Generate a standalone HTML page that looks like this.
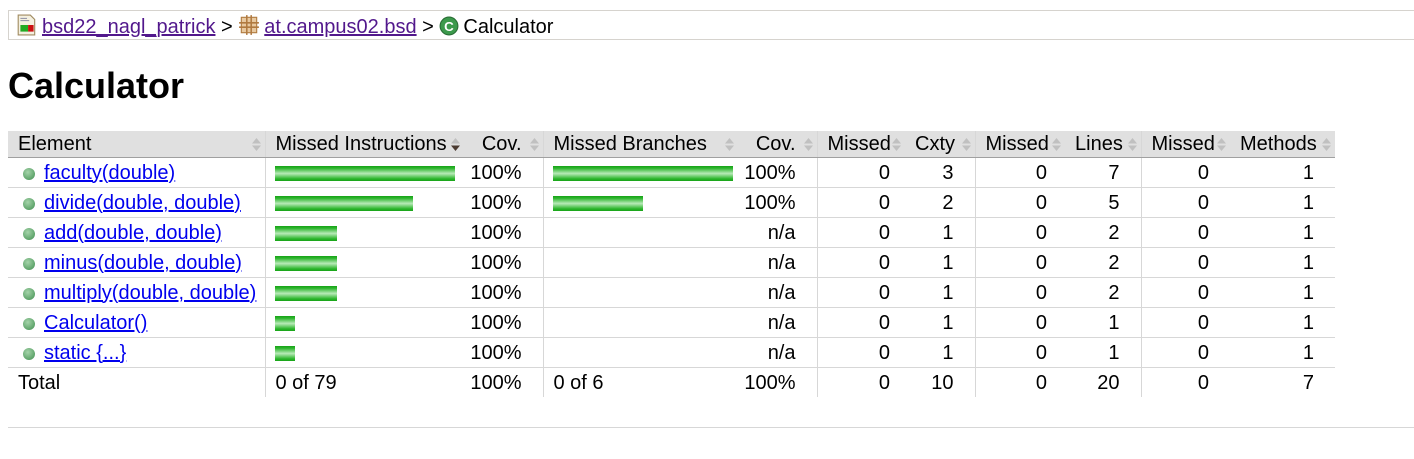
<!DOCTYPE html>
<html><head><meta charset="utf-8"><style>
body{margin:0;background:#fff;font-family:"Liberation Sans",Arial,sans-serif;font-size:20px;color:#000;width:1414px;height:459px;overflow:hidden;position:relative}
.bc{position:absolute;left:8px;top:10px;width:1420px;height:30px;border:1px solid #d6d3ce;box-sizing:border-box}
.bc .in{position:absolute;left:7px;top:3px;white-space:nowrap;line-height:23px}
.bc a{color:#52188c;text-decoration:underline}
.ic{display:inline-block;vertical-align:-3px;margin-right:4px}
h1{position:absolute;left:8px;top:65px;margin:0;font-size:36px;font-weight:bold;line-height:42px}
table{position:absolute;left:8px;top:131px;border-collapse:collapse;table-layout:fixed;width:1327px}
th{background:#e0e0e0;height:26px;padding:0 21px 0 10px;font-weight:normal;text-align:left;border-bottom:1px solid #a0a0a0;position:relative;white-space:nowrap;overflow:visible}
th.r{text-align:right}
td{height:28px;padding:1px 21px 0 10px;border-bottom:1px solid #d7d7d7;white-space:nowrap;overflow:visible;box-sizing:content-box}
tr.t td{border-bottom:none}
td.r{text-align:right}
td.c{padding-left:0;padding-right:21px}
td.m1{padding-right:15px}
td.m2{padding-right:18px}
.b{border-right:1px solid #d7d7d7}
.srt{position:absolute;right:3px;top:6px;width:11px;height:15px}
td a{color:#0000ee}
.dot{display:inline-block;width:12px;height:12px;border-radius:50%;background:radial-gradient(circle at 40% 35%,#a5d4aa,#3f8f4f);margin:0 9px 0 5px;vertical-align:-1px}
.bar{display:inline-block;height:15px;background:linear-gradient(#16a316 0,#2eb52e 15%,#b8eab8 50%,#2eb52e 85%,#16a316 100%);vertical-align:-2px;margin-left:-1px}
.foot{position:absolute;left:8px;top:427px;width:1406px;border-top:1px solid #d7d7d7}
</style></head><body>
<div class="bc"><div class="in">
<svg class="ic" width="22" height="22" viewBox="0 0 20 20"><path d="M2 1h11l4 4v14H2z" fill="#f4f0e0" stroke="#a08a60"/><rect x="4" y="10" width="7" height="6" fill="#2a2"/><rect x="11" y="10" width="5" height="6" fill="#c11"/><path d="M4 4h6M4 6h8" stroke="#99a"/></svg><a>bsd22_nagl_patrick</a> &gt; <svg class="ic" width="22" height="22" viewBox="0 0 20 20"><rect x="3" y="3" width="14" height="14" fill="#e8c9a0" stroke="#b07a40"/><path d="M8 1v18M12 1v18M1 8h18M1 12h18" stroke="#b07a40" stroke-width="1.4"/></svg><a>at.campus02.bsd</a> &gt; <svg class="ic" width="20" height="20" viewBox="0 0 18 18"><circle cx="9" cy="9" r="8" fill="#3c9a4c" stroke="#2a6e36"/><text x="9" y="13.5" font-size="12" font-weight="bold" fill="#fff" text-anchor="middle" font-family="Liberation Sans">C</text></svg>Calculator</div></div>
<h1>Calculator</h1>
<svg width="0" height="0" style="position:absolute"><defs><g id="sa"><path d="M1 6.5L5.5 1 10 6.5z" fill="#c0c0c0"/><path d="M1 8.5l4.5 5.5L10 8.5z" fill="#c0c0c0"/></g><g id="sd"><path d="M1 6.5L5.5 1 10 6.5z" fill="#c0c0c0"/><path d="M1 8.5l4.5 5.5L10 8.5z" fill="#4a3a30"/></g></defs></svg>
<table>
<colgroup><col style="width:257px"><col style="width:199px"><col style="width:79px"><col style="width:195px"><col style="width:79px"><col style="width:88px"><col style="width:70px"><col style="width:90px"><col style="width:76px"><col style="width:89px"><col style="width:105px"></colgroup>
<tr>
<th class="b">Element<svg class="srt" viewBox="0 0 11 15"><use href="#sa"/></svg></th>
<th>Missed Instructions<svg class="srt" viewBox="0 0 11 15"><use href="#sd"/></svg></th>
<th class="r b">Cov.<svg class="srt" viewBox="0 0 11 15"><use href="#sa"/></svg></th>
<th>Missed Branches<svg class="srt" viewBox="0 0 11 15"><use href="#sa"/></svg></th>
<th class="r b">Cov.<svg class="srt" viewBox="0 0 11 15"><use href="#sa"/></svg></th>
<th class="r">Missed<svg class="srt" viewBox="0 0 11 15"><use href="#sa"/></svg></th>
<th class="r b">Cxty<svg class="srt" viewBox="0 0 11 15"><use href="#sa"/></svg></th>
<th class="r">Missed<svg class="srt" viewBox="0 0 11 15"><use href="#sa"/></svg></th>
<th class="r b">Lines<svg class="srt" viewBox="0 0 11 15"><use href="#sa"/></svg></th>
<th class="r">Missed<svg class="srt" viewBox="0 0 11 15"><use href="#sa"/></svg></th>
<th class="r">Methods<svg class="srt" viewBox="0 0 11 15"><use href="#sa"/></svg></th>
</tr>
<tr><td class="b"><span class="dot"></span><a href="#">faculty(double)</a></td><td><span class="bar" style="width:180px"></span></td><td class="r b c">100%</td><td><span class="bar" style="width:180px"></span></td><td class="r b c">100%</td><td class="r m1">0</td><td class="r b">3</td><td class="r m2">0</td><td class="r b">7</td><td class="r">0</td><td class="r">1</td></tr>
<tr><td class="b"><span class="dot"></span><a href="#">divide(double, double)</a></td><td><span class="bar" style="width:138px"></span></td><td class="r b c">100%</td><td><span class="bar" style="width:90px"></span></td><td class="r b c">100%</td><td class="r m1">0</td><td class="r b">2</td><td class="r m2">0</td><td class="r b">5</td><td class="r">0</td><td class="r">1</td></tr>
<tr><td class="b"><span class="dot"></span><a href="#">add(double, double)</a></td><td><span class="bar" style="width:62px"></span></td><td class="r b c">100%</td><td></td><td class="r b c">n/a</td><td class="r m1">0</td><td class="r b">1</td><td class="r m2">0</td><td class="r b">2</td><td class="r">0</td><td class="r">1</td></tr>
<tr><td class="b"><span class="dot"></span><a href="#">minus(double, double)</a></td><td><span class="bar" style="width:62px"></span></td><td class="r b c">100%</td><td></td><td class="r b c">n/a</td><td class="r m1">0</td><td class="r b">1</td><td class="r m2">0</td><td class="r b">2</td><td class="r">0</td><td class="r">1</td></tr>
<tr><td class="b"><span class="dot"></span><a href="#">multiply(double, double)</a></td><td><span class="bar" style="width:62px"></span></td><td class="r b c">100%</td><td></td><td class="r b c">n/a</td><td class="r m1">0</td><td class="r b">1</td><td class="r m2">0</td><td class="r b">2</td><td class="r">0</td><td class="r">1</td></tr>
<tr><td class="b"><span class="dot"></span><a href="#">Calculator()</a></td><td><span class="bar" style="width:20px"></span></td><td class="r b c">100%</td><td></td><td class="r b c">n/a</td><td class="r m1">0</td><td class="r b">1</td><td class="r m2">0</td><td class="r b">1</td><td class="r">0</td><td class="r">1</td></tr>
<tr><td class="b"><span class="dot"></span><a href="#">static {...}</a></td><td><span class="bar" style="width:20px"></span></td><td class="r b c">100%</td><td></td><td class="r b c">n/a</td><td class="r m1">0</td><td class="r b">1</td><td class="r m2">0</td><td class="r b">1</td><td class="r">0</td><td class="r">1</td></tr>
<tr class="t"><td class="b">Total</td><td>0 of 79</td><td class="r b c">100%</td><td>0 of 6</td><td class="r b c">100%</td><td class="r m1">0</td><td class="r b">10</td><td class="r m2">0</td><td class="r b">20</td><td class="r">0</td><td class="r">7</td></tr>
</table>
<div class="foot"></div>
</body></html>
